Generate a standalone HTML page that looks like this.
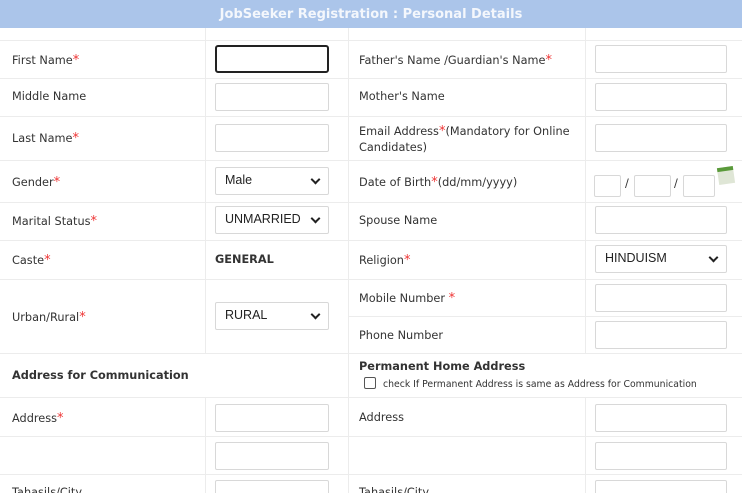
<!DOCTYPE html>
<html style="overflow:hidden;height:493px"><head><style>
body{margin:0;width:742px;height:493px;overflow:hidden;background:#fff;font-family:"DejaVu Sans","Liberation Sans",sans-serif;font-size:11.3px;color:#333;position:relative}
.a{position:absolute}
.hd{left:0;top:0;width:742px;height:28px;background:#abc5ea;color:#f4f7fc;font-weight:bold;font-size:13px;text-align:center;line-height:29px}
.hl{position:absolute;height:1px;background:#ececec}
.vl{position:absolute;width:1px;background:#ececec}
.in{position:absolute;border:1px solid #d8d8d8;background:#fff;border-radius:2px;box-sizing:border-box;height:28px}
.sel{position:absolute;border:1px solid #d8d8d8;background:#fff;border-radius:2px;box-sizing:border-box;height:28px;font-family:"Liberation Sans",sans-serif;font-size:12.5px;color:#222;padding-left:9px;line-height:25px}
.sel:after{content:"";position:absolute;right:9px;top:8px;width:5px;height:5px;border-right:2px solid #222;border-bottom:2px solid #222;transform:rotate(45deg)}
.l{position:absolute;white-space:nowrap}
.r{color:#e33;font-size:13px}
</style></head><body>
<div class="a hd">JobSeeker Registration : Personal Details</div>
<div class="hl" style="left:0;top:40px;width:742px"></div>
<div class="hl" style="left:0;top:78px;width:742px"></div>
<div class="hl" style="left:0;top:116px;width:742px"></div>
<div class="hl" style="left:0;top:160px;width:742px"></div>
<div class="hl" style="left:0;top:202px;width:742px"></div>
<div class="hl" style="left:0;top:240px;width:742px"></div>
<div class="hl" style="left:0;top:279px;width:742px"></div>
<div class="hl" style="left:348px;top:316px;width:394px"></div>
<div class="hl" style="left:0;top:353px;width:742px"></div>
<div class="hl" style="left:0;top:397px;width:742px"></div>
<div class="hl" style="left:0;top:436px;width:742px"></div>
<div class="hl" style="left:0;top:474px;width:742px"></div>
<div class="vl" style="left:205px;top:28px;height:325px"></div>
<div class="vl" style="left:348px;top:28px;height:465px"></div>
<div class="vl" style="left:585px;top:28px;height:325px"></div>
<div class="vl" style="left:205px;top:397px;height:96px"></div>
<div class="vl" style="left:585px;top:397px;height:96px"></div>

<div class="l" style="left:12px;top:53px">First Name<span class="r">*</span></div>
<div class="in" style="left:215px;top:45px;width:114px;border:2px solid #222;border-radius:3px"></div>
<div class="l" style="left:359px;top:53px">Father's Name /Guardian's Name<span class="r">*</span></div>
<div class="in" style="left:595px;top:45px;width:132px"></div>

<div class="l" style="left:12px;top:90px">Middle Name</div>
<div class="in" style="left:215px;top:83px;width:114px"></div>
<div class="l" style="left:359px;top:90px">Mother's Name</div>
<div class="in" style="left:595px;top:83px;width:132px"></div>

<div class="l" style="left:12px;top:131px">Last Name<span class="r">*</span></div>
<div class="in" style="left:215px;top:124px;width:114px"></div>
<div class="l" style="left:359px;top:124px;line-height:16px">Email Address<span class="r">*</span>(Mandatory for Online<br>Candidates)</div>
<div class="in" style="left:595px;top:124px;width:132px"></div>

<div class="l" style="left:12px;top:175px">Gender<span class="r">*</span></div>
<div class="sel" style="left:215px;top:167px;width:114px">Male</div>
<div class="l" style="left:359px;top:175px">Date of Birth<span class="r">*</span>(dd/mm/yyyy)</div>
<div class="in" style="left:594px;top:175px;width:27px;height:22px"></div>
<div class="l" style="left:625px;top:177px">/</div>
<div class="in" style="left:634px;top:175px;width:37px;height:22px"></div>
<div class="l" style="left:674px;top:177px">/</div>
<div class="in" style="left:683px;top:175px;width:32px;height:22px"></div>
<div class="a" style="left:718px;top:167px;width:16px;height:17px;background:#dfe6d6;border-top:4px solid #5a9a3a;transform:rotate(-8deg);box-sizing:border-box"></div>

<div class="l" style="left:12px;top:214px">Marital Status<span class="r">*</span></div>
<div class="sel" style="left:215px;top:206px;width:114px">UNMARRIED</div>
<div class="l" style="left:359px;top:214px">Spouse Name</div>
<div class="in" style="left:595px;top:206px;width:132px"></div>

<div class="l" style="left:12px;top:253px">Caste<span class="r">*</span></div>
<div class="l" style="left:215px;top:253px;font-weight:bold">GENERAL</div>
<div class="l" style="left:359px;top:253px">Religion<span class="r">*</span></div>
<div class="sel" style="left:595px;top:245px;width:132px">HINDUISM</div>

<div class="l" style="left:12px;top:310px">Urban/Rural<span class="r">*</span></div>
<div class="sel" style="left:215px;top:302px;width:114px">RURAL</div>
<div class="l" style="left:359px;top:291px">Mobile Number <span class="r">*</span></div>
<div class="in" style="left:595px;top:284px;width:132px"></div>
<div class="l" style="left:359px;top:329px">Phone Number</div>
<div class="in" style="left:595px;top:321px;width:132px"></div>

<div class="l" style="left:12px;top:369px;font-weight:bold">Address for Communication</div>
<div class="l" style="left:359px;top:360px;font-weight:bold">Permanent Home Address</div>
<div class="a" style="left:364px;top:377px;width:10px;height:10px;border:1px solid #555;border-radius:2px"></div>
<div class="l" style="left:383px;top:379px;font-size:9.3px">check If Permanent Address is same as Address for Communication</div>

<div class="l" style="left:12px;top:411px">Address<span class="r">*</span></div>
<div class="in" style="left:215px;top:404px;width:114px"></div>
<div class="l" style="left:359px;top:411px">Address</div>
<div class="in" style="left:595px;top:404px;width:132px"></div>
<div class="in" style="left:215px;top:442px;width:114px"></div>
<div class="in" style="left:595px;top:442px;width:132px"></div>
<div class="l" style="left:12px;top:486px">Tahasils/City</div>
<div class="in" style="left:215px;top:480px;width:114px"></div>
<div class="l" style="left:359px;top:486px">Tahasils/City</div>
<div class="in" style="left:595px;top:480px;width:132px"></div>
</body></html>
